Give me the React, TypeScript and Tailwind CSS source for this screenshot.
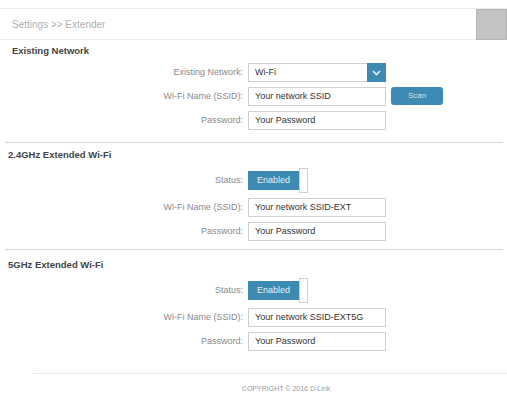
import React from 'react';

const label = "w-[248px] pr-[5px] text-right text-[9px] text-[#8a8a8a] leading-none";
const box = "w-[138px] h-[19px] border border-[#cfcfcf] bg-white flex items-center px-[6px] text-[9px] text-[#333] leading-none";
const heading = "h-[12px] flex items-center text-[9.5px] font-bold text-[#444]";

function Field({ name, value }: { name: string; value: string }) {
  return (
    <div className="flex items-center">
      <div className={label}>{name}</div>
      <div className={box}>{value}</div>
    </div>
  );
}

function Toggle() {
  return (
    <div className="flex items-center h-[25px]">
      <div className={label}>Status:</div>
      <div className="flex items-center">
        <div className="w-[51px] h-[19px] bg-[#3d8ab3] text-[#e6f1f7] text-[9px] leading-none flex items-center justify-center">
          Enabled
        </div>
        <div className="w-[9px] h-[25px] border border-[#cfcfcf] bg-white" />
      </div>
    </div>
  );
}

export default function App() {
  return (
    <div className="w-[507px] h-[393px] bg-white overflow-hidden" style={{ fontFamily: '"Liberation Sans", Arial, sans-serif' }}>
      {/* Breadcrumb */}
      <div className="mt-[8px] flex h-[32px] border-t border-[#ececec]">
        <div className="flex-1 border-b border-[#ececec] flex items-center pl-[12px] text-[10px] text-[#b0b0b0]">
          Settings &gt;&gt; Extender
        </div>
        <div className="w-[31px] bg-[#c3c3c3] border border-[#b5b5b5]" />
      </div>

      {/* Existing Network */}
      <div className={`mt-[5px] pl-[12px] ${heading}`}>Existing Network</div>
      <div className="mt-[6px] flex flex-col gap-[5px]">
        <div className="flex items-center">
          <div className={label}>Existing Network:</div>
          <div className="w-[138px] h-[19px] border border-[#cfcfcf] bg-white flex items-center">
            <span className="flex-1 px-[6px] text-[9px] text-[#333] leading-none">Wi-Fi</span>
            <div className="w-[19px] h-[19px] -mr-px bg-[#3d8ab3] flex items-center justify-center">
              <svg width="9" height="6" viewBox="0 0 9 6" fill="none">
                <path d="M1 1l3.5 3.5L8 1" stroke="#e6f1f7" strokeWidth="1.6" />
              </svg>
            </div>
          </div>
        </div>
        <div className="flex items-center">
          <div className={label}>Wi-Fi Name (SSID):</div>
          <div className={box}>Your network SSID</div>
          <button className="ml-[5px] -mt-[2px] w-[52px] h-[18px] rounded-[3px] bg-[#3d8ab3] text-[#cfe3ee] text-[8px] leading-none">
            Scan
          </button>
        </div>
        <Field name="Password:" value="Your Password" />
      </div>

      <div className="mt-[12px] ml-[5px] mr-[4px] border-t border-[#d6d6d6]" />

      {/* 2.4GHz */}
      <div className={`mt-[6px] pl-[8px] ${heading}`}>2.4GHz Extended Wi-Fi</div>
      <div className="mt-[7px] flex flex-col gap-[5px]">
        <Toggle />
        <Field name="Wi-Fi Name (SSID):" value="Your network SSID-EXT" />
        <Field name="Password:" value="Your Password" />
      </div>

      <div className="mt-[8px] ml-[5px] mr-[4px] border-t border-[#d6d6d6]" />

      {/* 5GHz */}
      <div className={`mt-[9px] pl-[8px] ${heading}`}>5GHz Extended Wi-Fi</div>
      <div className="mt-[7px] flex flex-col gap-[5px]">
        <Toggle />
        <Field name="Wi-Fi Name (SSID):" value="Your network SSID-EXT5G" />
        <Field name="Password:" value="Your Password" />
      </div>

      {/* Footer */}
      <div className="mt-[22px] ml-[33px] border-t border-[#e6e6e6]" />
      <div className="mt-[9px] h-[10px] flex items-center justify-center pl-[65px] text-[7px] text-[#9a9a9a] leading-none">
        COPYRIGHT © 2016 D-Link
      </div>
    </div>
  );
}
